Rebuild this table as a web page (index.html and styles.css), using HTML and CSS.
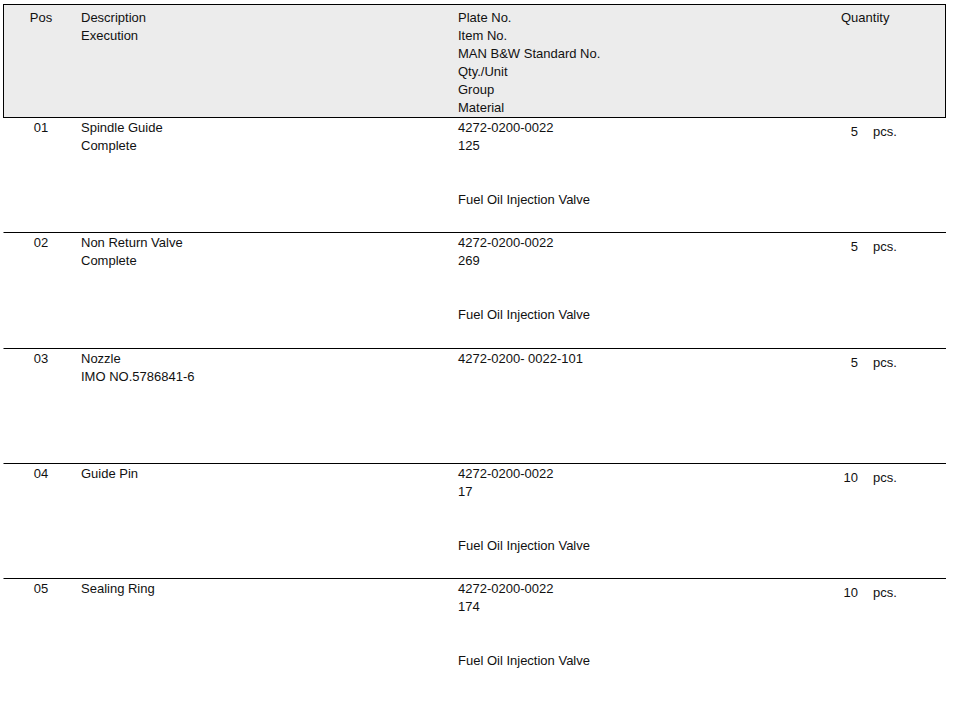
FILE: index.html
```html
<!DOCTYPE html>
<html>
<head>
<meta charset="utf-8">
<link rel="stylesheet" href="styles.css">
</head>
<body>
<div class="sheet">
  <div class="row head">
    <div class="pos">Pos</div>
    <div class="desc"><div class="ln">Description</div><div class="ln">Execution</div></div>
    <div class="plate">
      <div class="ln">Plate No.</div><div class="ln">Item No.</div><div class="ln">MAN B&amp;W Standard No.</div>
      <div class="ln">Qty./Unit</div><div class="ln">Group</div><div class="ln">Material</div>
    </div>
    <div class="qty-h">Quantity</div>
  </div>

  <div class="row item first">
    <div class="pos">01</div>
    <div class="desc"><div class="ln">Spindle Guide</div><div class="ln">Complete</div></div>
    <div class="plate">
      <div class="ln">4272-0200-0022</div><div class="ln">125</div><div class="ln"></div><div class="ln"></div><div class="ln">Fuel Oil Injection Valve</div>
    </div>
    <div class="qty"><span class="num">5</span><span class="unit">pcs.</span></div>
  </div>

  <div class="row item">
    <div class="pos">02</div>
    <div class="desc"><div class="ln">Non Return Valve</div><div class="ln">Complete</div></div>
    <div class="plate">
      <div class="ln">4272-0200-0022</div><div class="ln">269</div><div class="ln"></div><div class="ln"></div><div class="ln">Fuel Oil Injection Valve</div>
    </div>
    <div class="qty"><span class="num">5</span><span class="unit">pcs.</span></div>
  </div>

  <div class="row item">
    <div class="pos">03</div>
    <div class="desc"><div class="ln">Nozzle</div><div class="ln">IMO NO.5786841-6</div></div>
    <div class="plate">
      <div class="ln">4272-0200- 0022-101</div>
    </div>
    <div class="qty"><span class="num">5</span><span class="unit">pcs.</span></div>
  </div>

  <div class="row item">
    <div class="pos">04</div>
    <div class="desc"><div class="ln">Guide Pin</div></div>
    <div class="plate">
      <div class="ln">4272-0200-0022</div><div class="ln">17</div><div class="ln"></div><div class="ln"></div><div class="ln">Fuel Oil Injection Valve</div>
    </div>
    <div class="qty"><span class="num">10</span><span class="unit">pcs.</span></div>
  </div>

  <div class="row item">
    <div class="pos">05</div>
    <div class="desc"><div class="ln">Sealing Ring</div></div>
    <div class="plate">
      <div class="ln">4272-0200-0022</div><div class="ln">174</div><div class="ln"></div><div class="ln"></div><div class="ln">Fuel Oil Injection Valve</div>
    </div>
    <div class="qty"><span class="num">10</span><span class="unit">pcs.</span></div>
  </div>
</div>
</body>
</html>
```

FILE: styles.css
```css
html, body {
  margin: 0;
  padding: 0;
  background: #ffffff;
}

body {
  font-family: "Liberation Sans", Arial, sans-serif;
  font-size: 13px;
  line-height: 18px;
  color: #111111;
}

.sheet {
  margin: 4px 0 0 3px;
  width: 943px;
}

.row {
  display: grid;
  grid-template-columns: 74px 380px 383px 1fr;
  box-sizing: border-box;
}

.head {
  border: 1px solid #000000;
  background: #ececec;
  padding-top: 4px;
  height: 114px;
}

.item {
  border-left: 1px solid transparent;
  border-top: 1px solid #000000;
  padding-top: 1px;
  height: 115.35px;
}

.item.first {
  border-top: none;
  height: 114.35px;
}

.pos {
  text-align: center;
}

.desc {
  padding-left: 3px;
}

.ln {
  height: 18px;
  white-space: nowrap;
}

.qty {
  display: flex;
  align-items: flex-start;
  height: 18px;
  margin-top: 4px;
}

.num {
  width: 17px;
  text-align: right;
}

.unit {
  margin-left: 15px;
}
```
